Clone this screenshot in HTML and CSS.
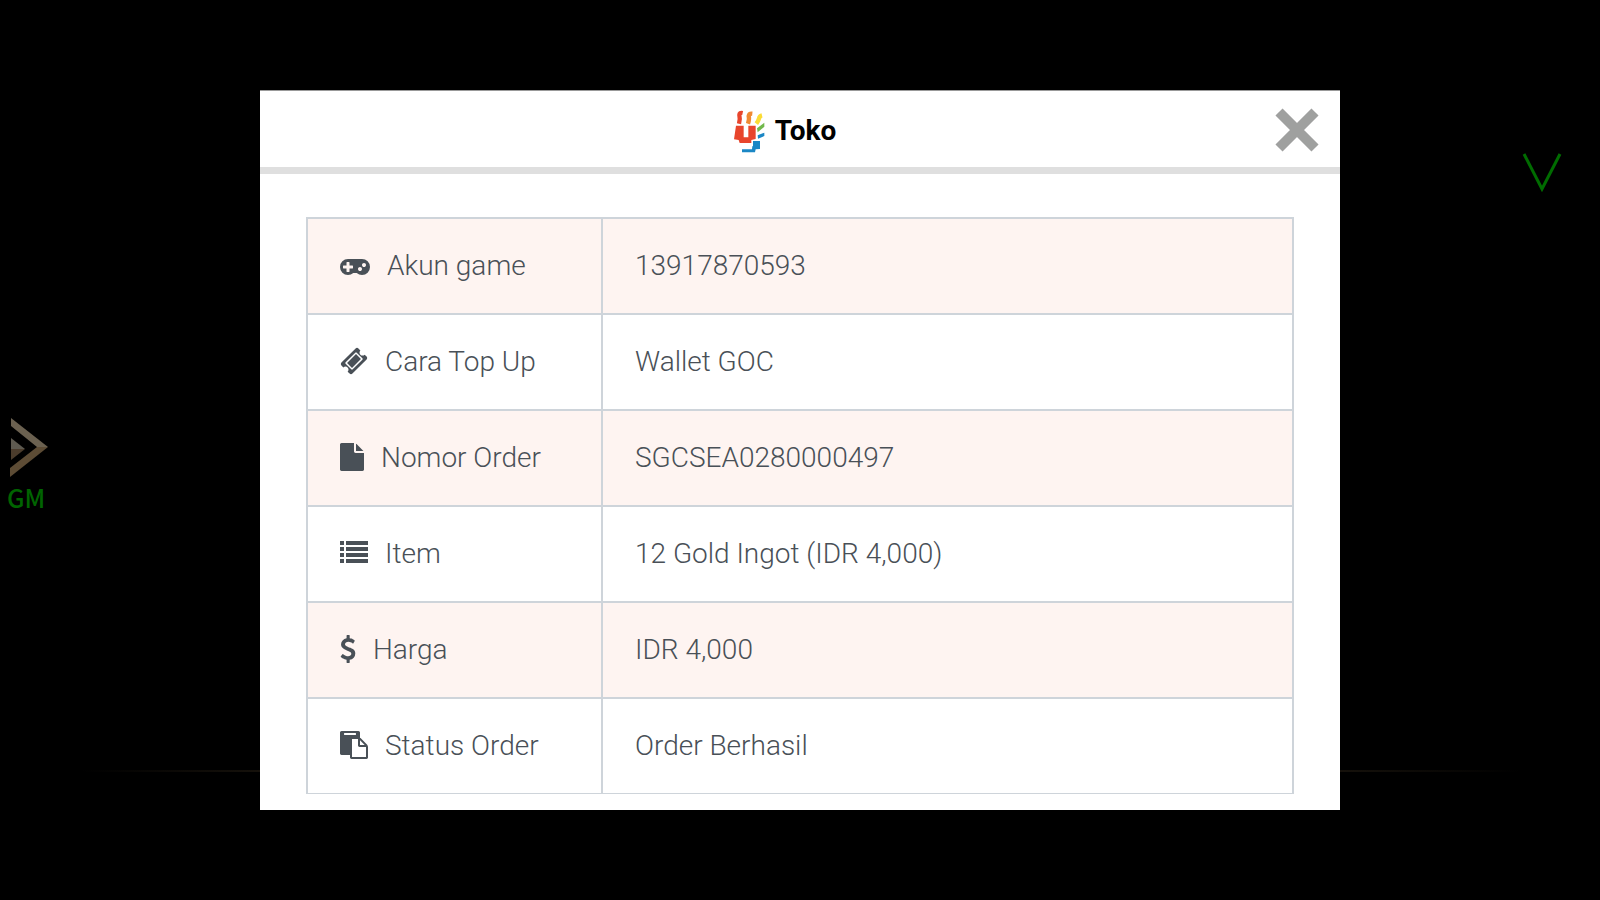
FILE: index.html
```html
<!DOCTYPE html>
<html lang="id">
<head>
    <meta charset="UTF-8">
    <meta name="viewport" content="width=device-width, initial-scale=1.0">
    <title>Toko</title>
    <link rel="stylesheet" href="styles.css">
</head>
<body>
    <!-- dimmed game screen behind the dialog -->
    <a href="#" class="gm">
        <svg width="42" height="62" viewBox="-2 0 42 62">
            <path d="M2 1 L39 30 L28 30 L2 9Z" fill="#6b6150"/>
            <path d="M39 30 L1 60 L1 51 L28 30Z" fill="#5d4c35"/>
            <path d="M2 21 L16 32 L2 32Z" fill="#5e5a50"/>
            <path d="M2 32 L16 32 L2 43Z" fill="#4b3c2c"/>
        </svg>
        <span>GM</span>
    </a>
    <button class="expand" aria-label="Buka">
        <svg width="40" height="40" viewBox="0 0 40 40"><path d="M2 2 L20 37 L38 2" fill="none" stroke="#006c00" stroke-width="3"/></svg>
    </button>
    <div class="floor-line"></div>

    <div class="modal" role="dialog" aria-labelledby="title">
        <div class="modal-header">
            <svg class="logo" width="34" height="44" viewBox="66 54 102 132">
                <g fill="none" stroke-width="13">
                    <path d="M98 66 Q88 64 88 72 Q91 82 87 98" stroke="#e8452c"/>
                    <path d="M127 68 Q117 67 116 75 Q119 84 114 98" stroke="#f08a32"/>
                    <path d="M156 73 Q148 75 147 83 Q145 90 139 98" stroke="#fbdc35"/>
                </g>
                <path d="M78 104 L101 104 L101 139 L115 139 L115 104 L137 104 L137 144 L124 147 L124 156 L89 156 L86 147 L72 145 Z" fill="#e8452c"/>
                <path d="M141 112 L163 95 L163 107 L143 124Z" fill="#71b84b"/>
                <path d="M143 133 L163 125 L163 135 L144 143Z" fill="#1b87c5"/>
                <path d="M129 150 L150 150 L150 174 L137 175 L135 184 L96 184 L96 175 L126 175 L127 166 L129 165Z" fill="#1b87c5"/>
            </svg>
            <h1 id="title">Toko</h1>
            <button class="close" aria-label="Tutup">
                <svg width="44" height="44" viewBox="0 0 44 44"><path d="M4 4 L40 40 M40 4 L4 40" stroke="#9fa09f" stroke-width="10"/></svg>
            </button>
        </div>
        <div class="modal-body">
            <table>
                <tr>
                    <th scope="row"><div class="label">
                        <svg width="30" height="28" viewBox="0 0 1920 1792"><path d="M832 1088v-128q0-14-9-23t-23-9h-192v-192q0-14-9-23t-23-9h-128q-14 0-23 9t-9 23v192h-192q-14 0-23 9t-9 23v128q0 14 9 23t23 9h192v192q0 14 9 23t23 9h128q14 0 23-9t9-23v-192h192q14 0 23-9t9-23zm576 64q0-53-37.5-90.5t-90.5-37.5-90.5 37.5-37.5 90.5 37.5 90.5 90.5 37.5 90.5-37.5 37.5-90.5zm256-256q0-53-37.5-90.5t-90.5-37.5-90.5 37.5-37.5 90.5 37.5 90.5 90.5 37.5 90.5-37.5 37.5-90.5zm256 128q0 212-150 362t-362 150q-192 0-338-128h-220q-146 128-338 128-212 0-362-150t-150-362 150-362 362-150h896q212 0 362 150t150 362z"/></svg>
                        Akun game
                    </div></th>
                    <td>13917870593</td>
                </tr>
                <tr>
                    <th scope="row"><div class="label">
                        <svg width="28" height="28" viewBox="0 0 1792 1792"><path d="M1024 452l316 316-572 572-316-316zm-211 979l618-618q19-19 19-45t-19-45l-362-362q-18-18-45-18t-45 18l-618 618q-19 19-19 45t19 45l362 362q18 18 45 18t45-18zm889-637l-907 908q-37 37-90.5 37t-90.5-37l-126-126q56-56 56-136t-56-136-136-56-136 56l-125-126q-37-37-37-90.5t37-90.5l907-906q37-37 90.5-37t90.5 37l125 125q-56 56-56 136t56 136 136 56 136-56l126 125q37 37 37 90.5t-37 90.5z"/></svg>
                        Cara Top Up
                    </div></th>
                    <td>Wallet GOC</td>
                </tr>
                <tr>
                    <th scope="row"><div class="label">
                        <svg width="24" height="28" viewBox="128 0 1536 1792"><path d="M1152 512v-472q22 14 36 28l408 408q14 14 28 36h-472zm-128 32q0 40 28 68t68 28h544v1056q0 40-28 68t-68 28h-1344q-40 0-68-28t-28-68v-1600q0-40 28-68t68-28h800v544z"/></svg>
                        Nomor Order
                    </div></th>
                    <td>SGCSEA0280000497</td>
                </tr>
                <tr>
                    <th scope="row"><div class="label">
                        <svg width="28" height="28" viewBox="0 0 28 28"><path d="M0 2h4v4H0zM6 2h22v4H6zM0 8h4v4H0zM6 8h22v4H6zM0 14h4v4H0zM6 14h22v4H6zM0 20h4v4H0zM6 20h22v4H6z"/></svg>
                        Item
                    </div></th>
                    <td>12 Gold Ingot (IDR 4,000)</td>
                </tr>
                <tr>
                    <th scope="row"><div class="label">
                        <svg width="16" height="28" viewBox="384 0 1024 1792"><path d="M1362 1185q0 153-99.5 263.5t-258.5 136.5v175q0 14-9 23t-23 9h-135q-13 0-22.5-9.5t-9.5-22.5v-175q-66-9-127.5-31t-101.5-44.5-74-48-46.5-37.5-17.5-18q-17-21-2-41l103-135q7-10 23-12 15-2 24 9l2 2q113 99 243 125 37 8 74 8 81 0 142.5-43t61.5-122q0-28-15-53t-33.5-42-58.5-37.5-66-32-80-32.5q-39-16-61.5-25t-61.5-26.5-62.5-31-56.5-35.5-53.5-42.5-43.5-49-35.5-58-21-66.5-8.5-78q0-138 98-242t255-134v-180q0-13 9.5-22.5t22.5-9.5h135q14 0 23 9t9 23v176q57 6 110.5 23t87 33.5 63.5 37.5 39 29 15 14q17 18 5 38l-81 146q-8 15-23 16-14 3-27-7-3-3-14.5-12t-39-26.5-58.5-32-74.5-26-85.5-11.5q-95 0-155 43t-60 111q0 26 8.5 48t29.5 41.5 39.5 33 56 31 60.5 27 70 27.5q53 20 81 31.5t76 35 75.5 42.5 62 50 53 63.5 31.5 76.5 13 94z"/></svg>
                        Harga
                    </div></th>
                    <td>IDR 4,000</td>
                </tr>
                <tr>
                    <th scope="row"><div class="label">
                        <svg width="28" height="28" viewBox="0 0 1792 1792"><path d="M768 1664h896v-640h-416q-40 0-68-28t-28-68v-416h-384v1152zm256-1440v-64q0-13-9.5-22.5t-22.5-9.5h-704q-13 0-22.5 9.5t-9.5 22.5v64q0 13 9.5 22.5t22.5 9.5h704q13 0 22.5-9.5t9.5-22.5zm256 672h299l-299-299v299zm512 128v672q0 40-28 68t-68 28h-960q-40 0-68-28t-28-68v-160h-544q-40 0-68-28t-28-68v-1344q0-40 28-68t68-28h1088q40 0 68 28t28 68v328q21 13 36 28l408 408q28 28 48 76t20 88z"/></svg>
                        Status Order
                    </div></th>
                    <td>Order Berhasil</td>
                </tr>
            </table>
        </div>
    </div>
</body>
</html>
```
FILE: styles.css
```css
* { box-sizing: border-box; }
body {
    margin: 0;
    min-height: 100vh;
    display: flex;
    align-items: center;
    justify-content: center;
    background-color: #000;
    color: #495057;
    font-family: Roboto, sans-serif;
    font-size: 28px;
    font-weight: 300;
}
button { padding: 0; border: 0; background: none; cursor: pointer; }
svg { display: block; flex: none; }

/* things on the game screen */
.gm {
    position: absolute;
    left: 7px;
    top: 417px;
    color: #006400;
    font: 500 25px/36px "Noto Sans CJK SC", sans-serif;
    text-decoration: none;
}
.gm span { display: block; }
.expand { position: absolute; right: 38px; top: 152px; }
.floor-line {
    position: absolute;
    left: 5%;
    right: 5%;
    top: 770px;
    height: 2px;
    background: linear-gradient(to right, #000, #231c12 20%, #231c12 80%, #000);
}

.modal {
    position: relative;
    width: 67.5%;
    min-height: 80vh;
    background-color: #fff;
    border-top: 1px solid #999;
}
.modal-header {
    position: relative;
    height: 83px;
    display: flex;
    align-items: center;
    justify-content: center;
    gap: 9px;
    padding: 4px 32px 0 0;
    border-bottom: 7px solid #dfdfdf;
}
.modal-header h1 { margin: 0; color: #000; font-size: 28px; font-weight: 700; line-height: 32px; }
.close { position: absolute; right: 21px; top: 17px; }

.modal-body { padding: 43px 46px 16px; }
table {
    width: 100%;
    table-layout: fixed;
    border-spacing: 0;
    border-right: 2px solid #ced4da;
    border-bottom: 1px solid #ced4da;
}
th, td {
    height: 96px;
    padding: 0 32px 2px;
    border-top: 2px solid #ced4da;
    border-left: 2px solid #ced4da;
    text-align: left;
    font-weight: 300;
}
th { width: 295px; }
tr:nth-child(odd) { background-color: #fef4f1; }
.label { display: flex; align-items: center; gap: 17px; white-space: nowrap; }
.label svg { fill: #495057; }
```
